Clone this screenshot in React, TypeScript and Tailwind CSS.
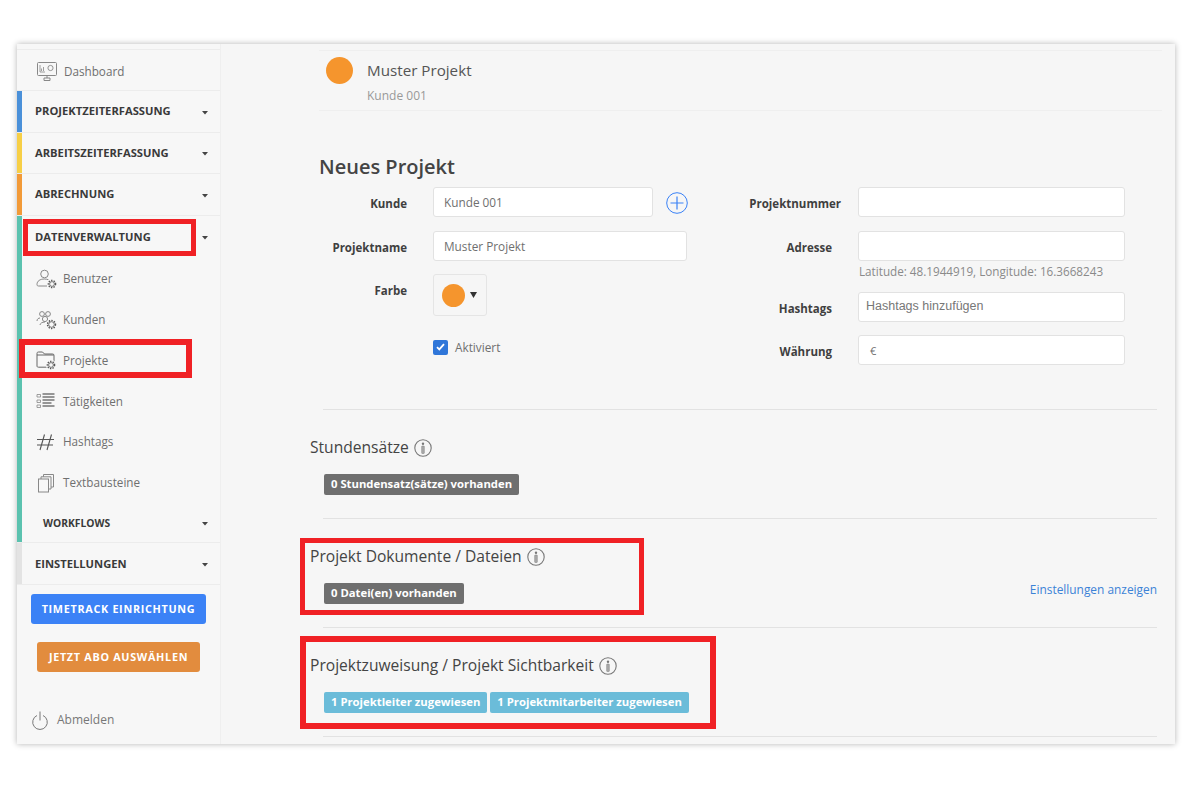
import React from 'react';

const Caret = () => (
  <svg width="6" height="4" viewBox="0 0 6 4" className="mt-[2px] shrink-0"><path d="M0 0h6L3 3.500z" fill="#444" /></svg>
);

const Gear = ({ x, y, r = 3 }: { x: number; y: number; r?: number }) => (
  <g>
    <circle cx={x} cy={y} r={r + 2.2} fill="#f7f7f7" stroke="none" />
    <circle cx={x} cy={y} r={r + 0.6} fill="none" stroke="#555" strokeWidth="1.4" strokeDasharray="1.4 1.2" />
    <circle cx={x} cy={y} r={r - 0.6} fill="none" stroke="#555" strokeWidth="0.8" />
  </g>
);

const IconFrame = ({ children, w = 22, h = 20 }: { children: React.ReactNode; w?: number; h?: number }) => (
  <svg width={w} height={h} viewBox={`0 0 ${w} ${h}`} fill="none" stroke="#888" strokeWidth="1" className="shrink-0">
    {children}
  </svg>
);

const UserIcon = () => (
  <IconFrame>
    <circle cx="8.5" cy="5" r="3.8" />
    <path d="M1 15.5c0-3.5 3-5.5 7.5-5.5 1.5 0 3 .3 4 .8M1 15.5c0 1 .5 1.5 1.5 1.5H11" />
    <Gear x={16} y={15} />
  </IconFrame>
);

const UsersIcon = () => (
  <IconFrame>
    <circle cx="6" cy="4" r="2.4" />
    <circle cx="12" cy="4" r="2.4" />
    <circle cx="9" cy="9" r="2.6" />
    <path d="M1 11c0-2 1.500-3 3-3M4 15c0-1.500 2-3 5-3" />
    <Gear x={15.500} y={14.500} r={3.400} />
  </IconFrame>
);

const FolderIcon = () => (
  <IconFrame>
    <path d="M1 16V3.500C1 2.500 1.500 2 2.500 2h4l2 2h8c1 0 1.500.5 1.500 1.500V12M1 16c0 .8.5 1.200 1.500 1.200H11" stroke="#666" />
    <path d="M1 5h17" stroke="#666" />
    <Gear x={15} y={15} />
  </IconFrame>
);

const ListIcon = () => (
  <IconFrame>
    <path d="M1 3.500h3.500v2.500H1zM1 9h3.500v2.500H1zM1 14h3.500v2.500H1z" strokeWidth="0.8" />
    <path d="M6.500 3h12M6.500 6h12M6.500 9h12M6.500 12h9M6.500 15h12" strokeWidth="1.300" stroke="#777" />
  </IconFrame>
);

const HashIcon = () => (
  <IconFrame>
    <path d="M1 7.500h17M1 13h16M8.500 2.500 4 18M15.500 2.500 11 18" stroke="#555" strokeWidth="1.100" />
  </IconFrame>
);

const CopyIcon = () => (
  <IconFrame>
    <rect x="2.500" y="6" width="10" height="13" />
    <path d="M5 6V3.800h10V16h-2.500M7.500 3.800V1.500h10V14h-2.500" />
  </IconFrame>
);

const DashboardIcon = () => (
  <IconFrame w={20} h={19}>
    <rect x="0.500" y="0.500" width="19" height="13" rx="1" />
    <path d="M3 3v7h5M4.500 9V6.500M6.500 9V5" strokeWidth="0.8" />
    <circle cx="13.500" cy="6" r="2.600" strokeWidth="0.9" />
    <path d="M7 16h6v2.500H7zM10 14v2" />
  </IconFrame>
);

const PowerIcon = () => (
  <svg width="16" height="19" viewBox="0 0 16 19" fill="none" stroke="#777" strokeWidth="1" className="shrink-0">
    <path d="M5 4.500a7.300 7.300 0 1 0 6 0M8 0.500v9" />
  </svg>
);

const InfoIcon = () => (
  <svg width="18" height="18" viewBox="0 0 18 18" fill="none" className="mt-[2px] shrink-0">
    <circle cx="9" cy="9" r="8.200" stroke="#777" strokeWidth="1.100" />
    <rect x="7.700" y="7" width="2.600" height="7.500" rx="0.600" fill="#aaa" stroke="#777" strokeWidth="0.500" />
    <circle cx="9" cy="4.800" r="1.200" fill="#777" />
  </svg>
);

const SectionHead = ({ color, label }: { color: string; label: string }) => (
  <div className="flex h-[41.5px] border-b border-[#ececec]">
    <div className={`w-[5px] ${color}`} />
    <div className="flex flex-1 items-center justify-between pt-[1px] pl-[13px] pr-3">
      <span className="text-[11.200px] font-bold text-[#3a3a3a]">{label}</span>
      <Caret />
    </div>
  </div>
);

const SubItem = ({ icon, label }: { icon: React.ReactNode; label: string }) => (
  <div className="flex h-[40.8px] items-center gap-[5px] pt-[2px] pl-[14px]">
    {icon}
    <span className="text-[11.700px] text-[#6f6f6f]">{label}</span>
  </div>
);

const Sidebar = () => (
  <aside className="flex w-[204px] shrink-0 flex-col border-r border-[#efefef] bg-[#f7f7f7]">
    <div className="h-[6px] border-b border-[#ececec]" />
    <div className="flex h-[41px] items-center gap-[7px] border-b border-[#ececec] pt-[3px] pl-[20px]">
      <DashboardIcon />
      <span className="text-[11.700px] text-[#6f6f6f]">Dashboard</span>
    </div>
    <SectionHead color="bg-[#4a90d9]" label="PROJEKTZEITERFASSUNG" />
    <SectionHead color="bg-[#f7cf46]" label="ARBEITSZEITERFASSUNG" />
    <SectionHead color="bg-[#f29a38]" label="ABRECHNUNG" />
    <div className="flex">
      <div className="w-[5px] bg-[#5bc2af]" />
      <div className="flex-1">
        <div className="flex h-[42px] items-center justify-between pt-[1px] pl-[13px] pr-3">
          <span className="text-[11.200px] font-bold text-[#3a3a3a]">DATENVERWALTUNG</span>
          <Caret />
        </div>
        <SubItem icon={<UserIcon />} label="Benutzer" />
        <SubItem icon={<UsersIcon />} label="Kunden" />
        <SubItem icon={<FolderIcon />} label="Projekte" />
        <SubItem icon={<ListIcon />} label="Tätigkeiten" />
        <SubItem icon={<HashIcon />} label="Hashtags" />
        <SubItem icon={<CopyIcon />} label="Textbausteine" />
        <div className="flex h-[40px] items-center justify-between pt-[2px] pl-[21px] pr-3">
          <span className="text-[10.300px] font-bold text-[#3a3a3a]">WORKFLOWS</span>
          <Caret />
        </div>
      </div>
    </div>
    <div className="border-t border-[#ececec]">
      <SectionHead color="bg-[#e3e3e3]" label="EINSTELLUNGEN" />
    </div>
    <div className="flex flex-col items-center">
      <button className="mt-[9px] h-[30px] w-[175px] rounded-[3px] bg-[#3b82f6] text-[10.800px] font-bold tracking-[0.7px] text-white">
        TIMETRACK EINRICHTUNG
      </button>
      <button className="mt-[18px] h-[30px] w-[163px] rounded-[3px] bg-[#e28c3e] text-[10.800px] font-bold tracking-[0.7px] text-white">
        JETZT ABO AUSWÄHLEN
      </button>
    </div>
    <div className="mt-[39px] flex items-center gap-[9px] pl-[15px]">
      <PowerIcon />
      <span className="text-[12px] text-[#777]">Abmelden</span>
    </div>
  </aside>
);

const inputCls = 'flex h-[30px] items-center rounded-[3px] border border-[#e2e2e2] bg-white pt-[2px] text-[11.800px] text-[#6f6f6f]';

const FormRow = ({ label, children, labelW, h }: { label: string; children: React.ReactNode; labelW: string; h: string }) => (
  <div className={`flex ${h}`}>
    <div className={`${labelW} pt-[8px] text-right text-[11.500px] leading-[18px] font-bold text-[#3f3f3f]`}>{label}</div>
    {children}
  </div>
);

const Form = () => (
  <div className="flex">
    <div className="flex w-[369px] flex-col">
      <FormRow label="Kunde" labelW="w-[88px]" h="h-[44px]">
        <div className="ml-[26px] flex items-start">
          <div className={`${inputCls} w-[220px] pl-[10px]`}>Kunde 001</div>
          <svg width="22" height="22" viewBox="0 0 22 22" fill="none" stroke="#3b82f6" strokeWidth="1" className="mt-[5px] ml-[13px]">
            <circle cx="11" cy="11" r="10.300" />
            <path d="M11 4.500v13M4.500 11h13" strokeWidth="1.200" />
          </svg>
        </div>
      </FormRow>
      <FormRow label="Projektname" labelW="w-[88px]" h="h-[43px]">
        <div className={`${inputCls} ml-[26px] w-[254px] pl-[10px]`}>Muster Projekt</div>
      </FormRow>
      <FormRow label="Farbe" labelW="w-[88px]" h="h-[64px]">
        <div className="ml-[26px] flex h-[42px] w-[54px] items-center gap-[5px] rounded-[3px] border border-[#e5e5e5] pl-[8px]">
          <span className="h-[23px] w-[23px] rounded-full bg-[#f5952d]" />
          <svg width="7" height="6" viewBox="0 0 7 6"><path d="M0 0h7L3.500 6z" fill="#333" /></svg>
        </div>
      </FormRow>
      <div className="ml-[114px] flex items-center gap-[7px]">
        <span className="flex h-[15px] w-[15px] items-center justify-center rounded-[2px] bg-[#2f76d9]">
          <svg width="9" height="8" viewBox="0 0 9 8" fill="none" stroke="#fff" strokeWidth="1.800"><path d="M1 4.200 3.300 6.400 8 1.200" /></svg>
        </span>
        <span className="pt-[1px] text-[11.800px] text-[#6f6f6f]">Aktiviert</span>
      </div>
    </div>
    <div className="flex flex-col">
      <FormRow label="Projektnummer" labelW="w-[153px]" h="h-[44px]">
        <div className={`${inputCls} ml-[17px] w-[267px]`} />
      </FormRow>
      <FormRow label="Adresse" labelW="w-[144px]" h="h-[61px]">
        <div className="ml-[26px] w-[267px]">
          <div className={inputCls} />
          <div className="mt-[2px] pl-[1px] text-[11.700px] leading-[16px] text-[#8a8a8a]">Latitude: 48.1944919, Longitude: 16.3668243</div>
        </div>
      </FormRow>
      <FormRow label="Hashtags" labelW="w-[144px]" h="h-[43px]">
        <div className="ml-[26px] h-[30px] w-[267px] rounded-[3px] border border-[#e2e2e2] bg-white pt-[4px] pl-[7px] font-['Liberation_Sans',sans-serif] text-[12.500px] text-[#777]">Hashtags hinzufügen</div>
      </FormRow>
      <FormRow label="Währung" labelW="w-[144px]" h="h-[30px]">
        <div className={`${inputCls} ml-[26px] w-[267px] pl-[11px] text-[11px]`}>€</div>
      </FormRow>
    </div>
  </div>
);

const Badge = ({ color, children }: { color: string; children: React.ReactNode }) => (
  <span className={`inline-flex h-[21px] items-center rounded-[2px] px-[7px] text-[11.300px] font-bold text-white ${color}`}>{children}</span>
);

const Section = ({ title, children, right }: { title: string; children: React.ReactNode; right?: React.ReactNode }) => (
  <div className="ml-[4px] h-[109px] border-b border-[#e2e2e2] pt-[27px]">
    <div className="-ml-[13px] flex h-[20px] items-center gap-[5px] text-[15.600px] leading-[20px] font-medium text-[#444]">
      {title}
      <InfoIcon />
    </div>
    <div className="mt-[17px] ml-[1px] flex items-center justify-between">
      <div className="flex gap-[3px]">{children}</div>
      {right}
    </div>
  </div>
);

const Main = () => (
  <main className="flex-1 pl-[98px] pr-[13px]">
    <div className="mt-[6px] h-[61px] border-t border-b border-[#efefef] pt-[6px]">
      <div className="flex items-center gap-[14px] pl-[7px]">
        <span className="h-[27px] w-[27px] rounded-full bg-[#f5952d]" />
        <span className="text-[15.200px] text-[#555]">Muster Projekt</span>
      </div>
      <div className="mt-[3px] pl-[48px] text-[12px] text-[#999]">Kunde 001</div>
    </div>
    <h1 className="mt-[41px] h-[35px] text-[20px] leading-[30px] font-semibold text-[#444]">Neues Projekt</h1>
    <Form />
    <div className="mt-[44px] mr-[5px] ml-[4px] border-t border-[#e2e2e2]" />
    <div className="mr-[5px]">
      <Section title="Stundensätze">
        <Badge color="bg-[#6f6f6f]">0 Stundensatz(sätze) vorhanden</Badge>
      </Section>
      <Section
        title="Projekt Dokumente / Dateien"
        right={<span className="-mt-[8px] text-[11.900px] text-[#3b82d6]">Einstellungen anzeigen</span>}
      >
        <Badge color="bg-[#6f6f6f]">0 Datei(en) vorhanden</Badge>
      </Section>
      <Section title="Projektzuweisung / Projekt Sichtbarkeit">
        <Badge color="bg-[#6bbcd9]">1 Projektleiter zugewiesen</Badge>
        <Badge color="bg-[#6bbcd9]">1 Projektmitarbeiter zugewiesen</Badge>
      </Section>
    </div>
  </main>
);

export default function App() {
  return (
    <div className="relative h-[787px] w-[1200px] overflow-hidden bg-white pt-[44px] pl-[17px] font-['Open_Sans',sans-serif]">
      <div className="flex h-[700px] w-[1158px] overflow-hidden bg-[#f6f6f6] shadow-[0_0_6px_rgba(0,0,0,0.3)]">
        <Sidebar />
        <Main />
      </div>
      <div className="absolute top-[219px] left-[23px] h-[37px] w-[173px] border-[5px] border-[#f02125]" />
      <div className="absolute top-[339px] left-[19px] h-[39px] w-[173px] border-[6px] border-[#f02125]" />
      <div className="absolute top-[538px] left-[300px] h-[77px] w-[344px] border-[5px] border-[#f02125]" />
      <div className="absolute top-[636px] left-[300px] h-[93px] w-[416px] border-[6px] border-[#f02125]" />
    </div>
  );
}
